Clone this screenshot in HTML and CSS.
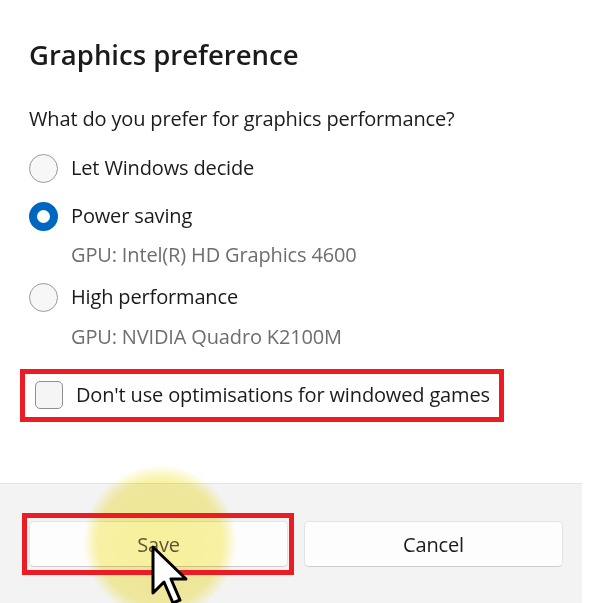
FILE: index.html
```html
<!DOCTYPE html>
<html lang="en">
<head>
<meta charset="utf-8">
<title>Graphics preference</title>
<link rel="stylesheet" href="styles.css">
</head>
<body>
<div class="dialog">
  <div class="content">
    <h1 class="title">Graphics preference</h1>
    <p class="question">What do you prefer for graphics performance?</p>

    <div class="options">
      <label class="option">
        <span class="radio"></span>
        <span class="option-label">Let Windows decide</span>
      </label>
      <label class="option option-gpu">
        <span class="radio radio-checked"></span>
        <span class="option-label">Power saving</span>
      </label>
      <div class="gpu gpu-first">GPU: Intel(R) HD Graphics 4600</div>
      <label class="option option-high">
        <span class="radio"></span>
        <span class="option-label">High performance</span>
      </label>
      <div class="gpu gpu-second">GPU: NVIDIA Quadro K2100M</div>
    </div>

    <label class="check-row">
      <span class="checkbox"></span>
      <span class="option-label">Don't use optimisations for windowed games</span>
    </label>
  </div>

  <div class="footer">
    <button class="btn btn-save">Save</button>
    <button class="btn">Cancel</button>
  </div>
</div>

<!-- annotation layer: click highlight, outlines and pointer -->
<div class="click-glow"></div>
<div class="mark mark-check"></div>
<div class="mark mark-save"></div>
<svg class="pointer" width="40" height="66" viewBox="0 0 40 66">
  <polygon points="2,2 2,48 13,37 22,58 29,55 20,34 35,34" fill="#ffffff" stroke="#000000" stroke-width="3" stroke-linejoin="round"/>
</svg>
</body>
</html>
```

FILE: styles.css
```css
html, body {
  margin: 0;
  padding: 0;
  background: #ffffff;
}

body {
  font-family: "Open Sans", "Noto Sans", sans-serif;
  color: #1b1b1b;
  width: 596px;
  height: 603px;
  overflow: hidden;
  position: relative;
}

.content {
  padding: 37px 0 0 29px;
  height: 446px;
}

.title {
  margin: 0;
  font-size: 27.5px;
  font-weight: 600;
  line-height: 36px;
}

.question {
  margin: 32px 0 0;
  font-size: 20px;
  line-height: 28px;
  letter-spacing: -0.15px;
}

.options {
  margin-top: 21px;
}

.option,
.check-row {
  display: flex;
  align-items: center;
  height: 28px;
}

.option-gpu {
  margin-top: 20px;
}

.option-high {
  margin-top: 15px;
}

.option-label {
  font-size: 20px;
  letter-spacing: -0.15px;
  line-height: 28px;
}

.option .option-label {
  margin-left: 13px;
}

.radio {
  width: 29px;
  height: 29px;
  box-sizing: border-box;
  border-radius: 50%;
  border: 1.5px solid #9a9a9a;
  background: #f7f7f7;
  flex: none;
}

.radio-checked {
  border: 8.5px solid #0067c0;
  background: #ffffff;
}

.gpu {
  margin-left: 42px;
  font-size: 20px;
  letter-spacing: -0.15px;
  line-height: 26px;
  color: #6e6e6e;
}

.gpu-first {
  margin-top: 12px;
}

.gpu-second {
  margin-top: 13px;
}

.check-row {
  margin-top: 31px;
  margin-left: 6px;
}

.checkbox {
  width: 28px;
  height: 28px;
  box-sizing: border-box;
  border: 1.5px solid #8f8f8f;
  border-radius: 5px;
  background: #f5f5f5;
  flex: none;
}

.check-row .option-label {
  margin-left: 13px;
}

.footer {
  width: 582px;
  height: 120px;
  box-sizing: border-box;
  background: #f3f3f3;
  border-top: 1px solid #e5e5e5;
  padding: 37px 19px 0 29px;
  display: flex;
  gap: 16px;
  align-items: flex-start;
}

.btn {
  flex: 1;
  height: 46px;
  margin: 0;
  padding: 0;
  background: #fdfdfd;
  border: 1px solid #e3e3e3;
  border-bottom-color: #cdcdcd;
  border-radius: 5px;
  font-family: inherit;
  font-size: 20px;
  letter-spacing: -0.15px;
  color: #1b1b1b;
}

.btn-save {
  color: #5c5c5c;
}

.click-glow {
  position: absolute;
  left: 84px;
  top: 466px;
  width: 152px;
  height: 152px;
  border-radius: 50%;
  background: radial-gradient(circle, rgba(248, 238, 130, 0.8) 0%, rgba(248, 238, 130, 0.72) 58%, rgba(248, 238, 130, 0) 72%);
  mix-blend-mode: multiply;
}

.mark {
  position: absolute;
  box-sizing: border-box;
  border: 5px solid #ec1c24;
}

.mark-check {
  left: 20px;
  top: 369px;
  width: 484px;
  height: 53px;
}

.mark-save {
  left: 22px;
  top: 513px;
  width: 272px;
  height: 62px;
}

.pointer {
  position: absolute;
  left: 151px;
  top: 545px;
}
```
